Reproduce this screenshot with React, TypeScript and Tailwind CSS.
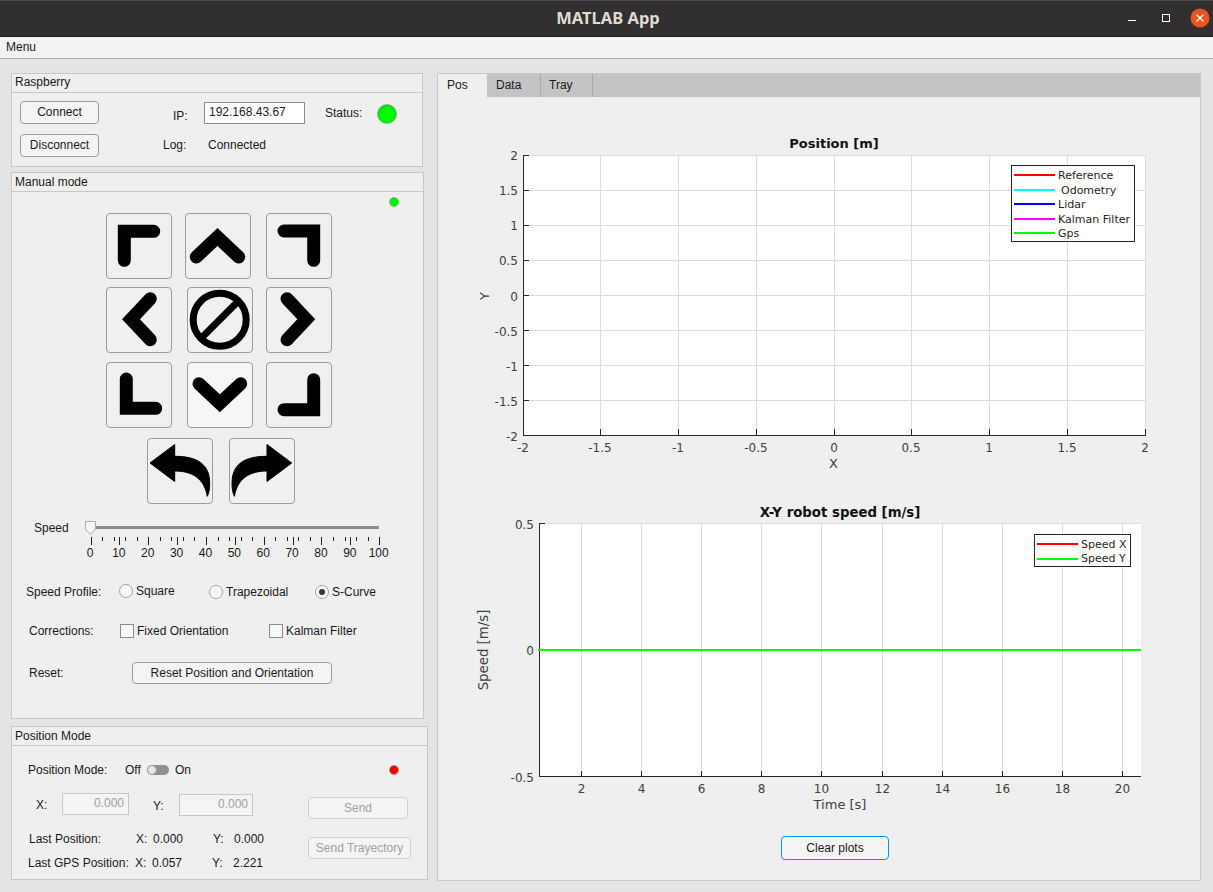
import type { ReactNode } from "react";

const CHART_FONT = "'DejaVu Sans', sans-serif";

function Panel({ title, className, titleClass, children }: { title: string; className: string; titleClass: string; children: ReactNode }) {
  return (
    <section className={`border border-[#c8c8c8] bg-[#efefef] ${className}`}>
      <div className={`h-[19px] border-b border-[#c8c8c8] pl-[3px] text-[12px] ${titleClass}`}>{title}</div>
      {children}
    </section>
  );
}

const BTN_TONE = {
  normal: "border-[#9c9c9c] text-[#1a1a1a]",
  off: "border-[#cfcfcf] text-[#a0a0a0]",
  focus: "border-[#0a93f5] text-[#1a1a1a]",
};

function Btn({ className, tone = "normal", children }: { className: string; tone?: keyof typeof BTN_TONE; children: ReactNode }) {
  return (
    <button className={`shrink-0 rounded-[4px] border bg-[#f4f4f4] text-center text-[12px] leading-none ${BTN_TONE[tone]} ${className}`}>
      {children}
    </button>
  );
}

function Lamp({ color, size }: { color: "green" | "red"; size: string }) {
  const fill =
    color === "green"
      ? "border-[#7cc47c] bg-[radial-gradient(circle_at_50%_55%,#00ff00_0%,#00f800_50%,#00a800_100%)]"
      : "border-[#c47c7c] bg-[radial-gradient(circle_at_50%_55%,#ff0000_0%,#f80000_50%,#a80000_100%)]";
  return <span className={`block shrink-0 rounded-full border ${fill} ${size}`} />;
}

function Pad({ d, hover, children }: { d?: string; hover?: boolean; children?: ReactNode }) {
  return (
    <button className={`block h-[66px] w-[66px] shrink-0 rounded-[4px] border border-[#9c9c9c] ${hover ? "bg-[#f6f6f6]" : "bg-[#f0f0f0]"}`}>
      <svg width="64" height="64" viewBox="1 1 64 64" className="block">
        {d && <path d={d} fill="none" stroke="#000" strokeWidth="13" strokeLinecap="round" strokeLinejoin="miter" />}
        {children}
      </svg>
    </button>
  );
}

const UNDO = "M3 25 L27.7 6.5 V18.3 C50 18.3 63 26 62.7 46 C62.7 52 61.5 56 60.3 58.3 C58 45 50 33 27.7 33 V43.5 Z";

function SpeedScale() {
  const minor = Array.from({ length: 26 }, (_, i) => i * 4);
  const major = Array.from({ length: 11 }, (_, i) => i * 10);
  const px = (v: number) => 90.5 + v * 2.887;
  return (
    <svg width="315" height="47" viewBox="80 515 315 47" className="block shrink-0">
      <rect x="90" y="526" width="289" height="3" fill="#8c8c8c" />
      {minor.map((v) => (
        <line key={v} x1={Math.round(px(v)) + 0.5} x2={Math.round(px(v)) + 0.5} y1="537" y2="541" stroke="#222" />
      ))}
      {major.map((v) => (
        <g key={v}>
          <line x1={Math.round(px(v)) + 0.5} x2={Math.round(px(v)) + 0.5} y1="537" y2="545" stroke="#222" />
          <text x={px(v) - 0.5} y="557" textAnchor="middle" fontSize="12" fill="#1a1a1a" fontFamily="'Liberation Sans', sans-serif">
            {v}
          </text>
        </g>
      ))}
      <path d="M85.5 521.5 H95.5 V529.5 L90.5 534 L85.5 529.5 Z" fill="#f6f6f6" stroke="#aaa" />
    </svg>
  );
}

function Radio({ label, on, width, up }: { label: string; on?: boolean; width: string; up?: boolean }) {
  return (
    <label className={`flex items-center gap-[3px] ${width} ${up ? "mb-[2px]" : ""}`}>
      <span className="flex h-[14px] w-[14px] items-center justify-center rounded-full border border-[#a0a0a0] bg-[#f8f8f8]">
        {on && <span className="h-[6px] w-[6px] rounded-full bg-[#333]" />}
      </span>
      {label}
    </label>
  );
}

function Check({ label, width }: { label: string; width: string }) {
  return (
    <label className={`flex items-center gap-[3px] ${width}`}>
      <span className="h-[14px] w-[14px] border border-[#8c8c8c] bg-[#f8f8f8]" />
      {label}
    </label>
  );
}

function Legend({ x, y, w, h, items }: { x: number; y: number; w: number; h: number; items: { label: string; color: string; ly: number; dx?: number; ty?: number }[] }) {
  return (
    <g>
      <rect x={x + 0.5} y={y + 0.5} width={w} height={h} fill="#fff" stroke="#262626" />
      {items.map((it) => (
        <g key={it.label}>
          <line x1={x + 3} x2={x + 44} y1={it.ly} y2={it.ly} stroke={it.color} strokeWidth="2" />
          <text x={x + 47 + (it.dx ?? 0)} y={it.ty ?? it.ly + 4} fontSize="11" fill="#262626" fontFamily={CHART_FONT}>
            {it.label}
          </text>
        </g>
      ))}
    </g>
  );
}

function PositionChart() {
  const xs = ["-2", "-1.5", "-1", "-0.5", "0", "0.5", "1", "1.5", "2"];
  const ys = ["2", "1.5", "1", "0.5", "0", "-0.5", "-1", "-1.5", "-2"];
  const px = (i: number) => Math.floor(523 + i * 77.75) + 0.5;
  const py = (i: number) => 155.5 + i * 35;
  return (
    <svg width="762" height="400" viewBox="438 97 762 400" className="block">
      <rect x="523" y="155" width="622" height="280" fill="#fff" />
      <g stroke="#dcdcdc" shapeRendering="crispEdges">
        {xs.map((_, i) => i > 0 && <line key={i} x1={px(i)} x2={px(i)} y1="155" y2="435" />)}
        {ys.map((_, i) => i < 8 && <line key={i} x1="523" x2="1145" y1={py(i)} y2={py(i)} />)}
      </g>
      <g stroke="#262626" shapeRendering="crispEdges">
        <line x1="523.5" x2="523.5" y1="155" y2="436" />
        <line x1="523" x2="1146" y1="435.5" y2="435.5" />
        {xs.map((_, i) => <line key={i} x1={px(i)} x2={px(i)} y1="429" y2="435" />)}
        {ys.map((_, i) => <line key={i} x1="523" x2="529" y1={py(i)} y2={py(i)} />)}
      </g>
      <g fontFamily={CHART_FONT} fontSize="12" fill="#404040">
        {xs.map((t, i) => <text key={t} x={px(i) - 0.5} y="452" textAnchor="middle">{t}</text>)}
        {ys.map((t, i) => <text key={t} x="518" y={py(i) + (i >= 4 ? 5 : 4)} textAnchor="end">{t}</text>)}
        <text x="833.5" y="468" textAnchor="middle" fontSize="13">X</text>
        <text x="0" y="0" textAnchor="middle" fontSize="13" transform="translate(489 296) rotate(-90)">Y</text>
      </g>
      <text x="834" y="148" textAnchor="middle" fontSize="13" fontWeight="700" fill="#111" fontFamily={CHART_FONT}>Position [m]</text>
      <Legend
        x={1011}
        y={165}
        w={123}
        h={76}
        items={[
          { label: "Reference", color: "#ff0000", ly: 175 },
          { label: "Odometry", color: "#00ffff", ly: 190, dx: 3 },
          { label: "Lidar", color: "#0000ff", ly: 204 },
          { label: "Kalman Filter", color: "#ff00ff", ly: 219 },
          { label: "Gps", color: "#00ff00", ly: 233 },
        ]}
      />
    </svg>
  );
}

function SpeedChart() {
  const ticks = [2, 4, 6, 8, 10, 12, 14, 16, 18, 20];
  const px = (i: number) => Math.round(581 + i * 60.1) + 0.5;
  return (
    <svg width="762" height="330" viewBox="438 497 762 330" className="block">
      <rect x="539" y="524" width="602" height="253" fill="#fff" />
      <g stroke="#dcdcdc" shapeRendering="crispEdges">
        {ticks.map((_, i) => <line key={i} x1={px(i)} x2={px(i)} y1="524" y2="777" />)}
        <line x1="539" x2="1141" y1="523.5" y2="523.5" />
      </g>
      <g stroke="#262626" shapeRendering="crispEdges">
        <line x1="539.5" x2="539.5" y1="523" y2="777" />
        <line x1="539" x2="1141" y1="776.5" y2="776.5" />
        <line x1="539" x2="545" y1="523.5" y2="523.5" />
        {ticks.map((_, i) => <line key={i} x1={px(i)} x2={px(i)} y1="771" y2="777" />)}
      </g>
      <line x1="538" x2="1141" y1="650" y2="650" stroke="#00ff00" strokeWidth="2" />
      <g fontFamily={CHART_FONT} fontSize="12" fill="#404040">
        {ticks.map((t, i) => <text key={t} x={px(i)} y="793" textAnchor="middle">{t}</text>)}
        <text x="534" y="529" textAnchor="end">0.5</text>
        <text x="534" y="655" textAnchor="end">0</text>
        <text x="534" y="782" textAnchor="end">-0.5</text>
        <text x="840" y="809" textAnchor="middle" fontSize="13">Time [s]</text>
        <text x="0" y="0" textAnchor="middle" fontSize="13.3" transform="translate(488 650) rotate(-90)">Speed [m/s]</text>
      </g>
      <text x="840" y="517" textAnchor="middle" fontSize="13.3" fontWeight="700" fill="#111" fontFamily={CHART_FONT}>X-Y robot speed [m/s]</text>
      <Legend
        x={1034}
        y={534}
        w={96}
        h={32}
        items={[
          { label: "Speed X", color: "#ff0000", ly: 544 },
          { label: "Speed Y", color: "#00ff00", ly: 559, ty: 562 },
        ]}
      />
    </svg>
  );
}

export default function App() {
  return (
    <div className="flex h-[892px] w-[1213px] flex-col overflow-hidden bg-[#e4e4e4] font-['Liberation_Sans',sans-serif] text-[12px] text-[#1a1a1a]">
      {/* window title bar */}
      <header className="flex h-[37px] shrink-0 items-center border-t border-b border-t-[#4a4848] border-b-[#1c1b1b] bg-[#312f2f]">
        <div className="w-[1120px] pl-[96px] text-center font-['Noto_Sans',sans-serif] text-[16.5px] font-bold text-[#dfdbd2]">MATLAB App</div>
        <svg width="93" height="35" viewBox="1120 1 93 35" className="block shrink-0">
          <line x1="1128" x2="1136" y1="20.5" y2="20.5" stroke="#fff" />
          <rect x="1162.5" y="14.5" width="7" height="7" fill="none" stroke="#fff" />
          <circle cx="1200" cy="18" r="9.5" fill="#e95420" />
          <path d="M1196.5 14.5 L1203.5 21.5 M1203.5 14.5 L1196.5 21.5" stroke="#fff" strokeWidth="1.4" />
        </svg>
      </header>
      <nav className="h-[22px] shrink-0 border-b border-[#a8a8a8] bg-[#f2f2f2] pl-[6px] text-[12px] leading-[21px]">Menu</nav>

      <main className="flex pl-[11px] pt-[14px]">
        <div className="flex w-[426px] shrink-0 flex-col">
          <Panel title="Raspberry" titleClass="leading-[17px]" className="h-[94px] w-[412px]">
            <div className="pl-[8px] pt-[8px]">
              <div className="flex h-[24px]">
                <Btn className="h-[23px] w-[79px] pb-[2px]">Connect</Btn>
                <span className="ml-[74px] w-[31px] pt-[6px]">IP:</span>
                <div className="mt-[1px] h-[22px] w-[101px] border border-[#8c8c8c] bg-white pl-[4px] leading-[19px]">192.168.43.67</div>
                <span className="ml-[20px] w-[52px] pt-[3px]">Status:</span>
                <Lamp color="green" size="mt-[3px] h-[20px] w-[20px]" />
              </div>
              <div className="mt-[9px] flex h-[23px] items-center">
                <Btn className="h-[23px] w-[79px] pb-[2px]">Disconnect</Btn>
                <span className="ml-[64px] w-[45px] pb-[2px]">Log:</span>
                <span className="pb-[2px]">Connected</span>
              </div>
            </div>
          </Panel>

          <Panel title="Manual mode" titleClass="leading-[19px]" className="mt-[5px] h-[547px] w-[413px]">
            <div className="pl-[377px] pt-[5px]">
              <Lamp color="green" size="h-[10px] w-[10px]" />
            </div>
            <div className="ml-[94px] mt-[6px] flex gap-[13px]">
              <Pad d="M47.7 18.3 H18.3 V47.3" />
              <Pad d="M11.3 44 L32.5 24 L53.7 44" />
              <div className="ml-[2px]">
                <Pad d="M18 18 H47.7 V47.3" />
              </div>
            </div>
            <div className="ml-[94px] mt-[8px] flex gap-[13px]">
              <Pad d="M44.3 11.7 L25 32.2 L44.3 52.7" />
              <div className="ml-[2px]">
                <Pad>
                  <circle cx="32.7" cy="32.7" r="26.5" fill="none" stroke="#000" strokeWidth="7" />
                  <line x1="13.5" y1="51.9" x2="51.9" y2="13.5" stroke="#000" strokeWidth="7" />
                </Pad>
              </div>
              <Pad d="M21 11.7 L40.3 32.2 L21 52.7" />
            </div>
            <div className="ml-[94px] mt-[9px] flex gap-[13px]">
              <Pad d="M20.3 17 V46.3 H49.7" />
              <div className="ml-[2px]">
                <Pad hover d="M12 21.7 L32.8 41.3 L53.7 21.7" />
              </div>
              <Pad d="M47.7 17.7 V47.7 H18" />
            </div>
            <div className="ml-[135px] mt-[10px] flex gap-[16px]">
              <Pad>
                <path d={UNDO} fill="#000" stroke="#000" strokeLinejoin="round" />
              </Pad>
              <Pad>
                <path d={UNDO} fill="#000" stroke="#000" strokeLinejoin="round" transform="matrix(-1 0 0 1 65.7 0)" />
              </Pad>
            </div>

            <div className="mt-[11px] flex pl-[22px]">
              <span className="mt-[5px] w-[46px] leading-[16px]">Speed</span>
              <SpeedScale />
            </div>

            <div className="ml-[14px] mt-[22px] flex h-[16px] items-center">
              <span className="w-[93px]">Speed Profile:</span>
              <Radio label="Square" width="w-[90px]" up />
              <Radio label="Trapezoidal" width="w-[106px]" />
              <Radio label="S-Curve" on width="w-[90px]" />
            </div>

            <div className="ml-[17px] mt-[23px] flex h-[16px] items-center">
              <span className="w-[91px]">Corrections:</span>
              <Check label="Fixed Orientation" width="w-[149px]" />
              <Check label="Kalman Filter" width="w-[120px]" />
            </div>

            <div className="ml-[17px] mt-[23px] flex h-[22px] items-center">
              <span className="w-[103px]">Reset:</span>
              <Btn className="h-[22px] w-[200px]">Reset Position and Orientation</Btn>
            </div>
          </Panel>

          <Panel title="Position Mode" titleClass="leading-[19px]" className="mt-[7px] h-[154px] w-[417px]">
            <div className="ml-[16px] mt-[16px] flex h-[16px] items-center">
              <span className="w-[97px]">Position Mode:</span>
              <span className="w-[22px]">Off</span>
              <span className="flex h-[10px] w-[22px] items-center rounded-full bg-[#8f8f8f]">
                <span className="h-[10px] w-[10px] rounded-full border border-[#9a9a9a] bg-[#e6e6e6]" />
              </span>
              <span className="ml-[6px] w-[214px]">On</span>
              <Lamp color="red" size="h-[10px] w-[10px]" />
            </div>

            <div className="flex">
              <div className="w-[296px] shrink-0">
                <div className="ml-[24px] mt-[15px] flex h-[23px]">
                  <span className="w-[26px] pt-[3px]">X:</span>
                  <div className="h-[22px] w-[67px] border border-[#c8c8c8] bg-[#f4f4f4] pr-[4px] text-right leading-[19px] text-[#a0a0a0]">0.000</div>
                  <span className="ml-[24px] w-[26px] pt-[4px]">Y:</span>
                  <div className="mt-[1px] h-[22px] w-[74px] border border-[#c8c8c8] bg-[#f4f4f4] pr-[4px] text-right leading-[19px] text-[#a0a0a0]">0.000</div>
                </div>
                <div className="ml-[17px] mt-[15px] flex h-[16px] items-center">
                  <span className="w-[107px]">Last Position:</span>
                  <span className="w-[17px]">X:</span>
                  <span className="w-[60px]">0.000</span>
                  <span className="w-[21px]">Y:</span>
                  <span>0.000</span>
                </div>
                <div className="ml-[16px] mt-[8px] flex h-[16px] items-center">
                  <span className="w-[107px]">Last GPS Position:</span>
                  <span className="w-[17px]">X:</span>
                  <span className="w-[60px]">0.057</span>
                  <span className="w-[21px]">Y:</span>
                  <span>2.221</span>
                </div>
              </div>
              <div className="flex flex-col items-start pt-[19px]">
                <Btn tone="off" className="h-[22px] w-[100px]">Send</Btn>
                <Btn tone="off" className="mt-[18px] h-[22px] w-[103px]">Send Trayectory</Btn>
              </div>
            </div>
          </Panel>
        </div>

        {/* plots */}
        <section className="h-[808px] w-[764px] shrink-0 border border-[#c8c8c8] bg-[#efefef]">
          <div className="flex h-[23px] bg-[#c4c4c4] leading-[22px]">
            <div className="w-[49px] bg-[#efefef] pl-[9px]">Pos</div>
            <div className="w-[54px] border-r border-[#a8a8a8] pl-[9px]">Data</div>
            <div className="w-[52px] border-r border-[#a8a8a8] pl-[8px]">Tray</div>
          </div>
          <PositionChart />
          <SpeedChart />
          <Btn tone="focus" className="ml-[343px] mt-[9px] h-[24px] w-[108px]">Clear plots</Btn>
        </section>
      </main>
    </div>
  );
}
